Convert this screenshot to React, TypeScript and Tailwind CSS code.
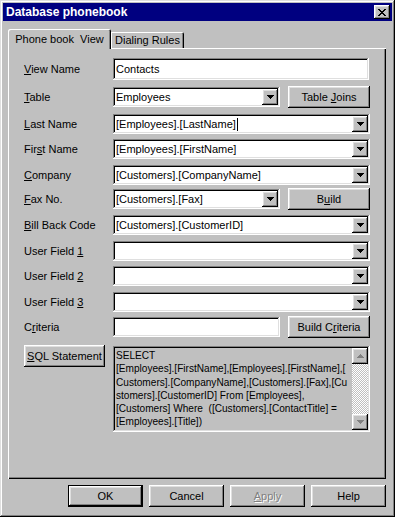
import React from "react";

const RAISED =
  "shadow-[inset_-1px_-1px_#000,inset_1px_1px_#fff,inset_-2px_-2px_#808080,inset_2px_2px_#dfdfdf]";
const SUNKEN =
  "shadow-[inset_-1px_-1px_#fff,inset_1px_1px_#808080,inset_-2px_-2px_#dfdfdf,inset_2px_2px_#000]";

function Tri({ up = false, color = "#000" }: { up?: boolean; color?: string }) {
  const rows = up ? [3, 2, 1, 0] : [0, 1, 2, 3];
  return (
    <svg width="7" height="4" viewBox="0 0 7 4" shapeRendering="crispEdges">
      {rows.map((inset, i) => (
        <rect key={i} x={inset} y={i} width={7 - inset * 2} height={1} fill={color} />
      ))}
    </svg>
  );
}

function DropBtn() {
  return (
    <div className={`w-[16px] h-[16px] mr-[2px] shrink-0 bg-[#c0c0c0] flex items-center justify-center ${RAISED}`}>
      <Tri />
    </div>
  );
}

function Combo({ value, w, cursor }: { value?: string; w: string; cursor?: boolean }) {
  return (
    <div className={`h-[20px] bg-white flex items-center ${SUNKEN} ${w}`}>
      <div className="flex-1 pl-[3px] overflow-hidden whitespace-nowrap text-[11px] leading-[13px] flex items-center">
        <span>{value}</span>
        {cursor && <span className="inline-block w-px h-[13px] bg-black ml-[1px]" />}
      </div>
      <DropBtn />
    </div>
  );
}

function Btn({ children, w = "w-[82px]", h = "h-[22px]", extra = "" }: { children: React.ReactNode; w?: string; h?: string; extra?: string }) {
  return (
    <div className={`${w} ${h} bg-[#c0c0c0] flex items-center justify-center text-[11px] leading-[13px] whitespace-nowrap shrink-0 ${RAISED} ${extra}`}>
      <span>{children}</span>
    </div>
  );
}

function Label({ children }: { children: React.ReactNode }) {
  return <div className="w-[89px] shrink-0 text-[11px] leading-[13px] whitespace-nowrap">{children}</div>;
}

export default function App() {
  return (
    <div
      className="w-[395px] h-[517px] bg-[#c0c0c0] p-[3px] text-black shadow-[inset_-1px_-1px_#000,inset_1px_1px_#dfdfdf,inset_-2px_-2px_#808080,inset_2px_2px_#fff]"
      style={{ fontFamily: '"Liberation Sans", Arial, sans-serif' }}
    >
      {/* Title bar */}
      <div className="h-[18px] bg-[#000080] flex items-center justify-between pl-[3px] pr-[2px]">
        <span className="text-white font-bold text-[12px] leading-[14px] whitespace-nowrap">Database phonebook</span>
        <div className={`w-[16px] h-[14px] bg-[#c0c0c0] flex items-center justify-center ${RAISED}`}>
          <svg width="8" height="7" viewBox="0 0 8 7" shapeRendering="crispEdges">
            <path d="M0 0h2v1h1v1h2v-1h1v-1h2v1h-1v1h-1v1h-1v1h1v1h1v1h1v1h-2v-1h-1v-1h-2v1h-1v1h-2v-1h1v-1h1v-1h1v-1h-1v-1h-1v-1h-1z" fill="#000" />
          </svg>
        </div>
      </div>

      {/* Tabs */}
      <div className="mt-[8px] ml-[5px] h-[19px] flex items-end">
        <div className="relative z-10 h-[20px] mb-[-1px] w-[103px] bg-[#c0c0c0] rounded-tl-[2px] rounded-tr-[2px] shadow-[inset_1px_1px_#fff,inset_-1px_0_#000,inset_-2px_0_#808080] flex items-start justify-center pt-[4px] text-[11px] leading-[13px] whitespace-pre">
          <span>{"Phone book  View"}</span>
        </div>
        <div className="h-[16px] w-[73px] bg-[#c0c0c0] rounded-tr-[2px] shadow-[inset_1px_1px_#fff,inset_-1px_0_#000,inset_-2px_0_#808080] flex items-start justify-center pt-[2px] text-[11px] leading-[13px] whitespace-nowrap">
          <span>Dialing Rules</span>
        </div>
      </div>

      {/* Panel */}
      <div className="ml-[5px] w-[378px] h-[431px] pl-[16px] pt-[10px] shadow-[inset_1px_1px_#fff,inset_-1px_-1px_#000,inset_-2px_-2px_#808080] flex flex-col">
        {/* View Name */}
        <div className="flex items-center h-[22px]">
          <Label><u>V</u>iew Name</Label>
          <div className={`w-[256px] h-[22px] bg-white flex items-center pl-[3px] text-[11px] leading-[13px] ${SUNKEN}`}><span>Contacts</span></div>
        </div>
        {/* Table */}
        <div className="flex items-center h-[22px] mt-[6px]">
          <Label><u>T</u>able</Label>
          <Combo value="Employees" w="w-[167px]" />
          <Btn extra="ml-[8px]">Table <u>J</u>oins</Btn>
        </div>
        <div className="flex items-center h-[20px] mt-[6px]">
          <Label><u>L</u>ast Name</Label>
          <Combo value="[Employees].[LastName]" w="w-[257px]" cursor />
        </div>
        <div className="flex items-center h-[20px] mt-[5px]">
          <Label>Fir<u>s</u>t Name</Label>
          <Combo value="[Employees].[FirstName]" w="w-[257px]" />
        </div>
        <div className="flex items-center h-[20px] mt-[6px]">
          <Label><u>C</u>ompany</Label>
          <Combo value="[Customers].[CompanyName]" w="w-[257px]" />
        </div>
        <div className="flex items-center h-[22px] mt-[3px]">
          <Label><u>F</u>ax No.</Label>
          <Combo value="[Customers].[Fax]" w="w-[167px]" />
          <Btn extra="ml-[8px]">B<u>u</u>ild</Btn>
        </div>
        <div className="flex items-center h-[20px] mt-[5px]">
          <Label><u>B</u>ill Back Code</Label>
          <Combo value="[Customers].[CustomerID]" w="w-[257px]" />
        </div>
        <div className="flex items-center h-[20px] mt-[6px]">
          <Label>User Field <u>1</u></Label>
          <Combo w="w-[257px]" />
        </div>
        <div className="flex items-center h-[20px] mt-[5px]">
          <Label>User Field <u>2</u></Label>
          <Combo w="w-[257px]" />
        </div>
        <div className="flex items-center h-[20px] mt-[6px]">
          <Label>User Field <u>3</u></Label>
          <Combo w="w-[257px]" />
        </div>
        <div className="flex items-center h-[22px] mt-[4px]">
          <Label>C<u>r</u>iteria</Label>
          <div className={`w-[167px] h-[20px] bg-white ${SUNKEN}`} />
          <Btn extra="ml-[8px]">Build C<u>r</u>iteria</Btn>
        </div>
        {/* SQL */}
        <div className="flex items-start mt-[7px]">
          <Btn w="w-[81px]"><u>S</u>QL Statement</Btn>
          <div className={`ml-[8px] mt-[1px] w-[257px] h-[86px] bg-[#c0c0c0] flex p-[2px] ${SUNKEN}`}>
            <div className="flex-1 pl-[1px] pt-[1px] text-[10.1px] leading-[13.3px] overflow-hidden whitespace-pre">
              <div>SELECT</div>
              <div>[Employees].[FirstName],[Employees].[FirstName],[</div>
              <div>Customers].[CompanyName],[Customers].[Fax],[Cu</div>
              <div>stomers].[CustomerID] From [Employees],</div>
              <div>[Customers] Where  ([Customers].[ContactTitle] =</div>
              <div>[Employees].[Title])</div>
            </div>
            <div className="w-[16px] flex flex-col shrink-0">
              <div className={`h-[16px] bg-[#c0c0c0] flex items-center justify-center ${RAISED}`}>
                <Tri up color="#808080" />
              </div>
              <div className="flex-1 bg-[repeating-conic-gradient(#c0c0c0_0%_25%,#ffffff_0%_50%)] bg-[length:2px_2px]" />
              <div className={`h-[16px] bg-[#c0c0c0] flex items-center justify-center ${RAISED}`}>
                <Tri color="#808080" />
              </div>
            </div>
          </div>
        </div>
      </div>

      {/* Bottom buttons */}
      <div className="ml-[5px] w-[378px] mt-[6px] flex justify-end gap-[6px]">
        <div className="w-[75px] h-[22px] border border-black">
          <div className={`w-full h-full bg-[#c0c0c0] flex items-center justify-center text-[11px] leading-[13px] ${RAISED}`}><span>OK</span></div>
        </div>
        <Btn w="w-[75px]">Cancel</Btn>
        <Btn w="w-[75px]">
          <span className="text-[#808080] [text-shadow:1px_1px_#fff]"><u>A</u>pply</span>
        </Btn>
        <Btn w="w-[75px]">Help</Btn>
      </div>
    </div>
  );
}
